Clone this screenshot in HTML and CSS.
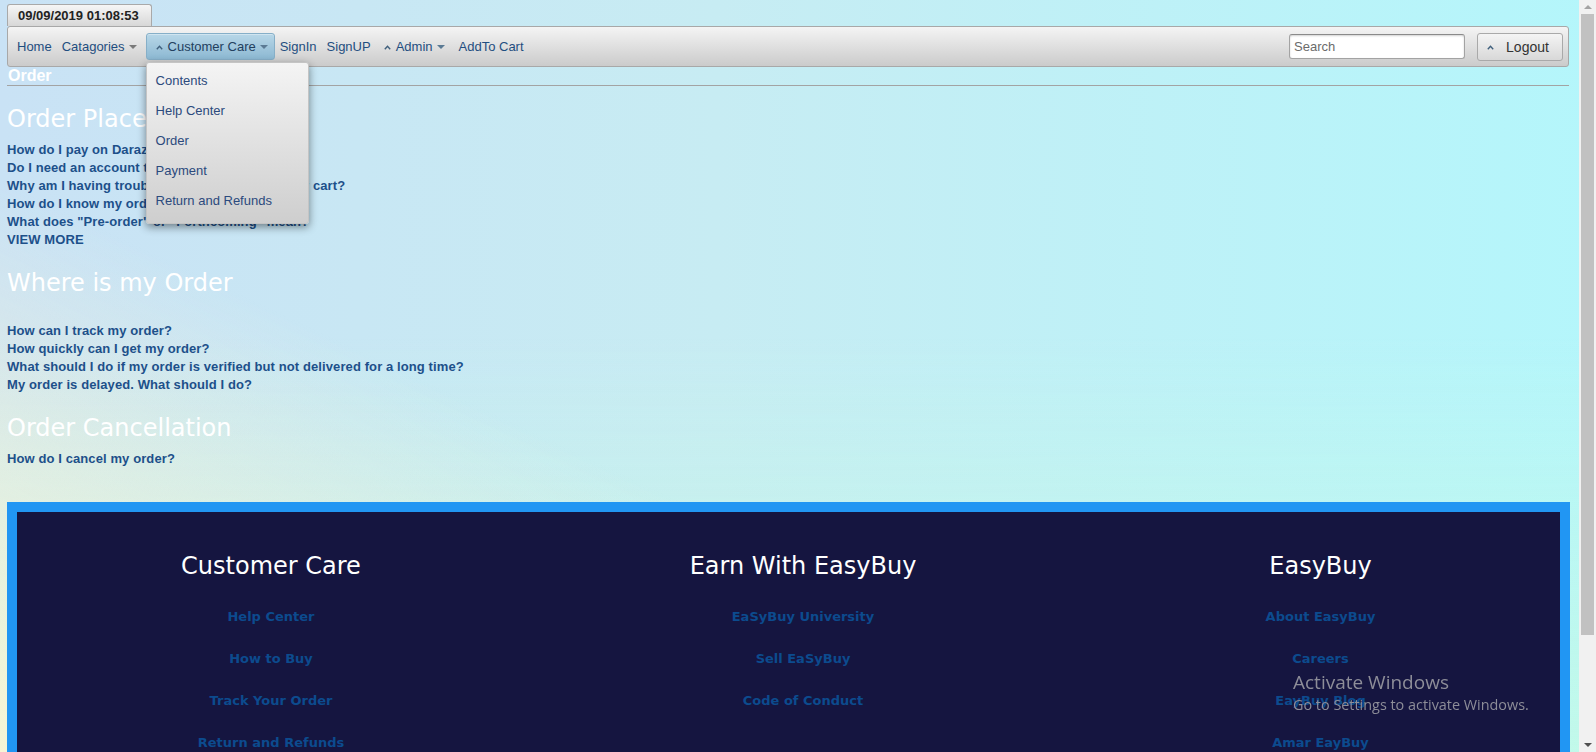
FILE: index.html
```html
<!DOCTYPE html>
<html lang="en">
<head>
<meta charset="utf-8">
<title>Order - EasyBuy</title>
<link rel="stylesheet" href="styles.css">
</head>
<body>
<div class="page">
  <div class="clock-tab">09/09/2019 01:08:53</div>
  <nav class="navbar">
    <ul class="nav-links">
      <li class="nav-item"><a href="#">Home</a></li>
      <li class="nav-item toggle"><a href="#">Catagories<span class="caret"></span></a></li>
      <li class="nav-item toggle up active">
        <a href="#"><svg class="chev" viewBox="0 0 7 5"><polyline points="0.8,4.2 3.5,1.3 6.2,4.2"/></svg>Customer Care<span class="caret"></span></a>
        <ul class="dropdown">
          <li><a href="#">Contents</a></li>
          <li><a href="#">Help Center</a></li>
          <li><a href="#">Order</a></li>
          <li><a href="#">Payment</a></li>
          <li><a href="#">Return and Refunds</a></li>
        </ul>
      </li>
      <li class="nav-item"><a href="#">SignIn</a></li>
      <li class="nav-item"><a href="#">SignUP</a></li>
      <li class="nav-item toggle up"><a href="#"><svg class="chev" viewBox="0 0 7 5"><polyline points="0.8,4.2 3.5,1.3 6.2,4.2"/></svg>Admin<span class="caret"></span></a></li>
      <li class="nav-item"><a href="#">AddTo Cart</a></li>
    </ul>
    <div class="nav-right">
      <input class="search" type="text" placeholder="Search">
      <button class="logout" type="button"><svg class="chev" viewBox="0 0 7 5"><polyline points="0.8,4.2 3.5,1.3 6.2,4.2"/></svg>Logout</button>
    </div>
  </nav>

  <div class="crumb">Order</div>

  <section>
    <h2 class="sec-title first">Order Placement</h2>
    <ul class="faq">
      <li><a href="#">How do I pay on Daraz?</a></li>
      <li><a href="#">Do I need an account to place an order?</a></li>
      <li><a href="#">Why am I having trouble adding a product to my cart?</a></li>
      <li><a href="#">How do I know my order is confirmed?</a></li>
      <li><a href="#">What does "Pre-order" or "Forthcoming" mean?</a></li>
      <li><a href="#" class="more">VIEW MORE</a></li>
    </ul>
  </section>

  <section>
    <h2 class="sec-title">Where is my Order</h2>
    <ul class="faq spaced">
      <li><a href="#">How can I track my order?</a></li>
      <li><a href="#">How quickly can I get my order?</a></li>
      <li><a href="#">What should I do if my order is verified but not delivered for a long time?</a></li>
      <li><a href="#">My order is delayed. What should I do?</a></li>
    </ul>
  </section>

  <section>
    <h2 class="sec-title">Order Cancellation</h2>
    <ul class="faq">
      <li><a href="#">How do I cancel my order?</a></li>
    </ul>
  </section>

  <footer class="footer">
    <div class="f-col">
      <h3 class="f-title">Customer Care</h3>
      <a href="#">Help Center</a>
      <a href="#">How to Buy</a>
      <a href="#">Track Your Order</a>
      <a href="#">Return and Refunds</a>
    </div>
    <div class="f-col">
      <h3 class="f-title">Earn With EasyBuy</h3>
      <a href="#">EaSyBuy University</a>
      <a href="#">Sell EaSyBuy</a>
      <a href="#">Code of Conduct</a>
    </div>
    <div class="f-col">
      <h3 class="f-title">EasyBuy</h3>
      <a href="#">About EasyBuy</a>
      <a href="#">Careers</a>
      <a href="#">EayBuy Blog</a>
      <a href="#">Amar EayBuy</a>
    </div>
  </footer>
</div>

<div class="scrollbar">
  <span class="sb-up"></span>
  <span class="sb-thumb"></span>
  <span class="sb-down"></span>
</div>

<div class="activate">
  <div class="act-title">Activate Windows</div>
  <div class="act-sub">Go to Settings to activate Windows.</div>
</div>
</body>
</html>
```

FILE: styles.css
```css
html {
  height: 100%;
  overflow: hidden;
  background-color: #c6ebf5;
  background-image:
    linear-gradient(to top right, rgba(250, 245, 212, 0.95) 0%, rgba(250, 245, 212, 0) 38%),
    linear-gradient(to bottom, rgba(195, 250, 228, 0) 45%, rgba(198, 250, 228, 0.75) 100%),
    linear-gradient(to right, #c9e2f5 0%, #c7ecf3 45%, #b4f6fb 100%);
}

body {
  margin: 0;
  font-family: "Liberation Sans", Arial, sans-serif;
}

.page {
  width: 1579px;
  box-sizing: border-box;
  padding: 4px 9px 0 7px;
}

/* clock tab */
.clock-tab {
  width: max-content;
  height: 21px;
  line-height: 21px;
  padding: 0 12px 0 10px;
  border: 1px solid #a9a9a9;
  border-bottom: 0;
  border-radius: 3px 3px 0 0;
  background: linear-gradient(#f6f6f6, #d7d7d7);
  font-size: 13px;
  font-weight: bold;
  color: #222;
}

/* navbar */
.navbar {
  display: flex;
  align-items: center;
  justify-content: space-between;
  height: 39px;
  margin-right: 1px;
  padding: 0 5px 0 4px;
  border: 1px solid #a8a8a8;
  border-radius: 3px;
  background: linear-gradient(#f4f4f4, #cbcbcb);
}

.nav-links {
  display: flex;
  align-items: center;
  list-style: none;
  margin: 0;
  padding: 0;
}

.nav-item {
  position: relative;
}

.nav-item > a {
  display: flex;
  align-items: center;
  box-sizing: border-box;
  height: 27px;
  padding: 0 5px;
  font-size: 13px;
  color: #1f4e80;
  text-decoration: none;
}

.nav-item.toggle > a {
  padding-right: 9px;
}

.nav-item.up > a {
  padding-left: 8px;
}

.nav-item.active > a {
  padding: 0 6px 0 9px;
  border: 1px solid #86afc8;
  border-radius: 3px;
  background: linear-gradient(#b8d7e8, #8cb8d2);
  box-shadow: inset 0 1px 0 rgba(255, 255, 255, 0.35);
  color: #23405e;
}

.caret {
  width: 0;
  height: 0;
  margin-left: 4px;
  margin-top: 1px;
  border-left: 4px solid transparent;
  border-right: 4px solid transparent;
  border-top: 4px solid #7a7a7a;
}

.nav-item.up .caret {
  border-top-color: #5b7a94;
}

.chev {
  width: 7px;
  height: 5px;
  margin-right: 5px;
  margin-top: 2px;
  fill: none;
  stroke: #3f5f7c;
  stroke-width: 1.4;
}

/* dropdown */
.dropdown {
  position: absolute;
  top: calc(100% + 2px);
  left: 0;
  z-index: 10;
  width: 163px;
  box-sizing: border-box;
  list-style: none;
  margin: 0;
  padding: 3px 0 7px;
  border: 1px solid #c4c4c4;
  border-radius: 3px;
  background: linear-gradient(#f4f4f4, #cecece);
  box-shadow: 0 3px 9px rgba(0, 0, 0, 0.45);
}

.dropdown a {
  display: block;
  height: 30px;
  line-height: 30px;
  padding-left: 9px;
  font-size: 13px;
  color: #2c4a7d;
  text-decoration: none;
}

/* right side */
.nav-right {
  display: flex;
  align-items: center;
}

.search {
  width: 176px;
  height: 25px;
  box-sizing: border-box;
  margin: 0 12px 0 0;
  padding: 0 4px;
  border: 1px solid #a3a3a3;
  border-top-color: #8a8a8a;
  border-radius: 3px;
  box-shadow: inset 0 1px 2px rgba(0, 0, 0, 0.18);
  background: #fff;
  font: 13px "Liberation Sans", Arial, sans-serif;
  color: #333;
}

.search::placeholder {
  color: #6b6b6b;
}

.logout {
  display: flex;
  align-items: center;
  justify-content: center;
  width: 86px;
  height: 28px;
  box-sizing: border-box;
  margin: 0;
  padding: 0 4px 0 0;
  border: 1px solid #a9a9a9;
  border-radius: 3px;
  background: linear-gradient(#f4f4f4, #d8d8d8);
  font: 14px "Liberation Sans", Arial, sans-serif;
  color: #333;
}

.logout .chev {
  margin-right: 12px;
}

/* breadcrumb */
.crumb {
  height: 18px;
  line-height: 18px;
  margin-right: 1px;
  padding-left: 1px;
  border-bottom: 1px solid #a3a3a3;
  font-size: 16px;
  font-weight: bold;
  color: #fff;
}

/* sections */
.sec-title {
  margin: 20px 0 8px;
  font: normal 24px/28px "DejaVu Sans", Verdana, sans-serif;
  color: #fff;
}

.sec-title.first {
  margin-top: 19px;
}

.faq {
  list-style: none;
  margin: 0;
  padding: 0;
}

.faq.spaced {
  padding-top: 17px;
}

.faq a {
  display: block;
  font: bold 13px/18px "Liberation Sans", Arial, sans-serif;
  letter-spacing: 0.1px;
  color: #1d508a;
  text-decoration: none;
}

/* footer */
.footer {
  display: grid;
  grid-template-columns: 508px 556px 1fr;
  margin-top: 34px;
  padding: 40px 0 70px;
  border: 10px solid #2196f3;
  background: #151540;
}

.f-col {
  display: flex;
  flex-direction: column;
  align-items: center;
  gap: 21.7px;
}

.f-title {
  margin: 0 0 5.8px;
  font: normal 24px/28px "DejaVu Sans", Verdana, sans-serif;
  color: #fff;
}

.f-col a {
  font: bold 13px/20px "DejaVu Sans", Verdana, sans-serif;
  color: #0c4b8e;
  text-decoration: none;
}

/* fake windows scrollbar */
.scrollbar {
  position: fixed;
  top: 0;
  right: 0;
  width: 17px;
  height: 100%;
  background: #f1f1f1;
}

.sb-thumb {
  position: absolute;
  left: 2px;
  right: 2px;
  top: 14px;
  height: 621px;
  background: #c1c1c1;
}

.sb-up,
.sb-down {
  position: absolute;
  left: 5px;
  width: 0;
  height: 0;
  border-left: 4px solid transparent;
  border-right: 4px solid transparent;
}

.sb-up {
  top: 5px;
  border-bottom: 4px solid #a3a3a3;
}

.sb-down {
  bottom: 5px;
  border-top: 4px solid #505050;
}

/* OS watermark */
.activate {
  position: fixed;
  left: 1293px;
  top: 669px;
  color: #8d8d98;
  font-family: "Open Sans", "Noto Sans", sans-serif;
}

.act-title {
  font-size: 19px;
  line-height: 26px;
}

.act-sub {
  font-size: 14.4px;
  line-height: 20px;
}
```
